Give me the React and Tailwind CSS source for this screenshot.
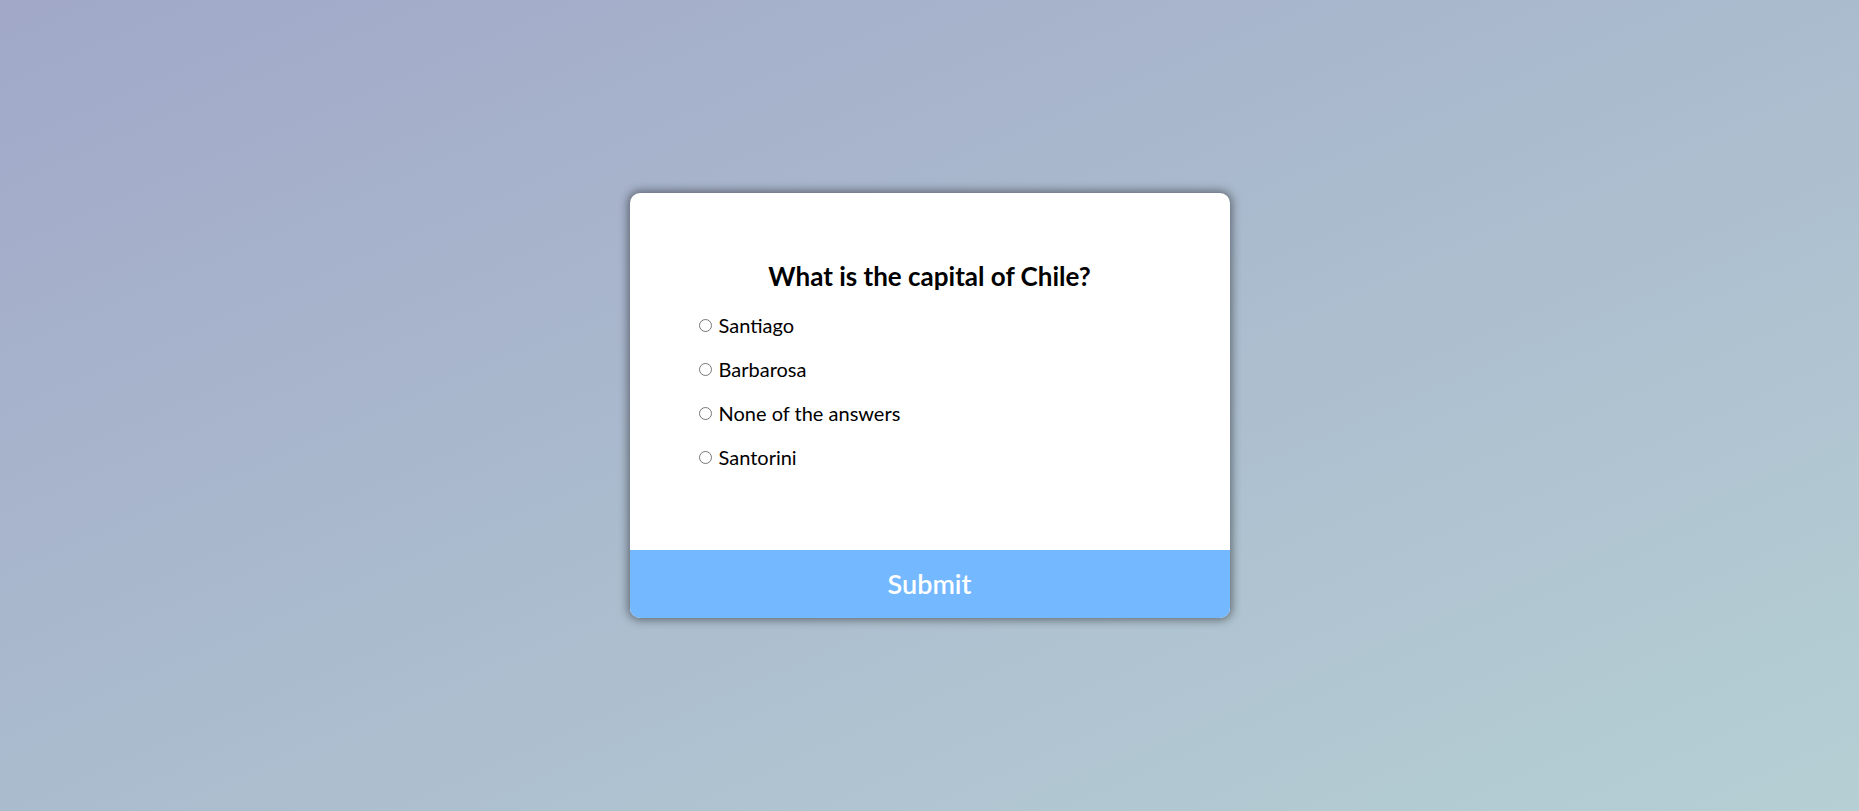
export default function App() {
  const options = ["Santiago", "Barbarosa", "None of the answers", "Santorini"];
  return (
    <div
      className="w-full h-[811px] flex items-center justify-center bg-[linear-gradient(to_bottom_right,#a1a8c8,#b5cfd4)]"
      style={{ fontFamily: "Lato, 'Noto Sans', sans-serif" }}
    >
      <div className="w-[600px] bg-white rounded-[10px] overflow-hidden shadow-[0_0_10px_2px_rgba(0,0,0,0.45)]">
        <div className="pt-[67px] pb-[79px] px-16">
          <h2 className="text-[26px] leading-[32px] font-bold text-center text-black">
            What is the capital of Chile?
          </h2>
          <ul className="mt-[19px] flex flex-col gap-4">
            {options.map((o, i) => (
              <li key={i} className="flex items-center h-[28px] text-[20px] text-black">
                <input type="radio" name="answer" className="ml-[5px] mr-[7px] w-[13px] h-[13px]" />
                <label>{o}</label>
              </li>
            ))}
          </ul>
        </div>
        <button className="w-full h-[68px] bg-[#74b9ff] text-white text-[27px] font-semibold">
          Submit
        </button>
      </div>
    </div>
  );
}
